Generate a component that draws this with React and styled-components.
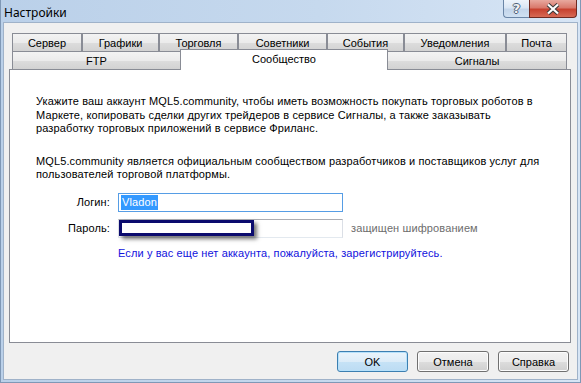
import React from "react";
import styled, { createGlobalStyle } from "styled-components";

const GlobalStyle = createGlobalStyle`
  html, body { margin: 0; padding: 0; background: #c3d7ed; }
  body {
    font-family: "Liberation Sans", Arial, sans-serif;
    font-size: 11px;
    color: #000;
  }
`;

const Window = styled.div`
  width: 581px;
  height: 383px;
  box-sizing: border-box;
  display: flex;
  flex-direction: column;
  background: linear-gradient(to right, #bad0e9 0%, #c6d9ee 55%, #d7e5f5 100%);
  border-left: 1px solid #7f98b6;
  border-right: 1px solid #7f98b6;
  border-bottom: 1px solid #7f98b6;
`;

const TitleBar = styled.div`
  height: 22px;
  display: flex;
  align-items: flex-start;
`;

const Title = styled.div`
  font-family: "Noto Sans", "Open Sans", sans-serif;
  font-size: 12px;
  line-height: 14px;
  padding: 6px 0 0 3px;
  flex: 1;
`;

const Controls = styled.div`
  display: flex;
  margin-right: 3px;
`;

const HelpButton = styled.div`
  width: 26px;
  height: 18px;
  box-sizing: border-box;
  border: 1px solid #6a85a6;
  border-top: none;
  border-right: none;
  border-radius: 0 0 0 4px;
  background: linear-gradient(#eef4fb 0%, #dae6f4 45%, #c3d5ea 55%, #cfe0f2 100%);
  display: flex;
  align-items: center;
  justify-content: center;
  font-family: "DejaVu Sans", sans-serif;
  font-weight: bold;
  font-size: 13px;
  color: #f2f2f2;
  text-shadow: -1px 0 #4d5f78, 1px 0 #4d5f78, 0 -1px #4d5f78, 0 1px #4d5f78;
`;

const CloseButton = styled.div`
  width: 48px;
  height: 18px;
  box-sizing: border-box;
  border: 1px solid #6e2a22;
  border-top: none;
  border-radius: 0 0 4px 0;
  background: linear-gradient(#e8a99f 0%, #d9796c 45%, #c7412f 55%, #d76a55 100%);
  display: flex;
  align-items: center;
  justify-content: center;
`;

const Client = styled.div`
  flex: 1;
  margin: 0 2px 2px 2px;
  background: #f0f0f0;
  border: 1px solid #9fb2c9;
  display: flex;
  flex-direction: column;
  padding: 10px 6px 0 5px;
`;

const TabStrip = styled.div`
  display: flex;
  flex-direction: column;
  padding: 0 3px;
`;

const TabRow = styled.div`
  display: flex;
  height: 18px;
`;

const Tab = styled.div`
  width: ${p => p.$w}px;
  box-sizing: border-box;
  border: 1px solid #898c95;
  border-bottom: none;
  background: linear-gradient(#f3f3f3 0%, #ebebeb 50%, #dddddd 51%, #d2d2d2 100%);
  display: flex;
  align-items: center;
  justify-content: center;
  padding-top: 1px;
`;

const ActiveTab = styled.div`
  width: ${p => p.$w + 2}px;
  height: 21px;
  margin: -2px -1px 0 -1px;
  box-sizing: border-box;
  border: 1px solid #898c95;
  border-bottom: none;
  background: #fff;
  position: relative;
  z-index: 1;
  display: flex;
  align-items: center;
  justify-content: center;
  padding-bottom: 2px;
`;

const Panel = styled.div`
  height: 274px;
  box-sizing: border-box;
  background: #fff;
  border: 1px solid #898c95;
  padding: 25px 0 0 26px;
  letter-spacing: 0.12px;
`;

const Para = styled.p`
  margin: 0 0 ${p => p.$mb || 0}px 0;
  line-height: 13.5px;
  white-space: nowrap;
`;

const Form = styled.div`
  display: grid;
  grid-template-columns: 74px 225px auto;
  column-gap: 8px;
  row-gap: 7px;
  align-items: center;
  margin-top: 11px;
`;

const Label = styled.div`
  text-align: right;
`;

const Field = styled.div`
  position: relative;
  height: 19px;
  box-sizing: border-box;
  border: 1px solid;
  border-color: ${p => (p.$focused ? "#569de5" : "#abadb3 #dbdfe6 #e3e9ef #e2e3ea")};
  background: #fff;
  display: flex;
  align-items: center;
  padding-left: 2px;
`;

const Selected = styled.span`
  background: #3399ff;
  color: #fff;
  padding: 1px 1px;
  line-height: 13px;
`;

const MaskBox = styled.div`
  position: absolute;
  left: 0;
  top: 0;
  width: 135px;
  height: 16px;
  box-sizing: border-box;
  border: 3px solid #0b0b6e;
  background: #fff;
  box-shadow: 3px 3px 4px rgba(0, 0, 0, 0.55);
`;

const Note = styled.div`
  color: #6d6d6d;
`;

const Link = styled.div`
  grid-column: 2 / 4;
  color: #1212dd;
  margin-top: 2px;
  white-space: nowrap;
`;

const ButtonRow = styled.div`
  display: flex;
  justify-content: flex-end;
  gap: 9px;
  margin-top: 8px;
  padding-right: 2px;
`;

const Button = styled.div`
  width: ${p => p.$w}px;
  height: 21px;
  box-sizing: border-box;
  border: 1px solid ${p => (p.$default ? "#3c7fb1" : "#707070")};
  border-radius: 3px;
  background: ${p =>
    p.$default
      ? "linear-gradient(#eaf4fb 0%, #dcecf8 50%, #c6e2f6 51%, #bcdcf3 100%)"
      : "linear-gradient(#f2f2f2 0%, #ebebeb 50%, #dddddd 51%, #cfcfcf 100%)"};
  box-shadow: inset 0 0 0 1px ${p => (p.$default ? "#b6e1fb" : "#fcfcfc")};
  display: flex;
  align-items: center;
  justify-content: center;
`;

const topTabs = [
  ["Сервер", 70],
  ["Графики", 77],
  ["Торговля", 79],
  ["Советники", 89],
  ["События", 77],
  ["Уведомления", 102],
  ["Почта", 61],
];

export default function App() {
  return (
    <>
      <GlobalStyle />
      <Window>
        <TitleBar>
          <Title>Настройки</Title>
          <Controls>
            <HelpButton>?</HelpButton>
            <CloseButton>
              <svg width="14" height="12" viewBox="0 0 14 12">
                <path d="M2 1.5 L12 10.5 M12 1.5 L2 10.5" stroke="#3a3a3a" strokeWidth="4.2" />
                <path d="M2 1.5 L12 10.5 M12 1.5 L2 10.5" stroke="#ffffff" strokeWidth="2.2" />
              </svg>
            </CloseButton>
          </Controls>
        </TitleBar>
        <Client>
          <TabStrip>
            <TabRow>
              {topTabs.map(([t, w]) => (
                <Tab key={t} $w={w}>{t}</Tab>
              ))}
            </TabRow>
            <TabRow>
              <Tab $w={169}>FTP</Tab>
              <ActiveTab $w={206}>Сообщество</ActiveTab>
              <Tab $w={180}>Сигналы</Tab>
            </TabRow>
          </TabStrip>
          <Panel>
            <Para $mb={19}>
              Укажите ваш аккаунт MQL5.community, чтобы иметь возможность покупать торговых роботов в
              <br />
              Маркете, копировать сделки других трейдеров в сервисе Сигналы, а также заказывать
              <br />
              разработку торговых приложений в сервисе Фриланс.
            </Para>
            <Para>
              MQL5.community является официальным сообществом разработчиков и поставщиков услуг для
              <br />
              пользователей торговой платформы.
            </Para>
            <Form>
              <Label>Логин:</Label>
              <Field $focused>
                <Selected>Vladon</Selected>
              </Field>
              <div />
              <Label>Пароль:</Label>
              <Field>
                <MaskBox />
              </Field>
              <Note>защищен шифрованием</Note>
              <Link>Если у вас еще нет аккаунта, пожалуйста, зарегистрируйтесь.</Link>
            </Form>
          </Panel>
          <ButtonRow>
            <Button $w={71} $default>OK</Button>
            <Button $w={72}>Отмена</Button>
            <Button $w={71}>Справка</Button>
          </ButtonRow>
        </Client>
      </Window>
    </>
  );
}
